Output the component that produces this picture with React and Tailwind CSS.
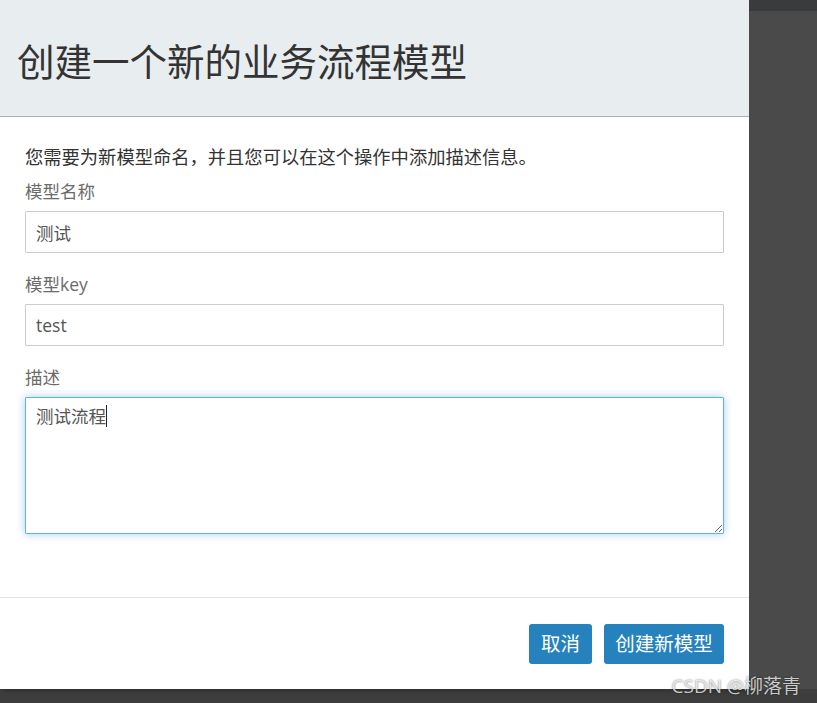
const fieldFont = {
  fontFamily: '"Open Sans", "Noto Sans CJK SC", sans-serif',
};

function Field({ label, value }) {
  return (
    <div className="mb-[19px]">
      <label className="mb-[7px] block text-[17.5px] leading-[25px] text-[#6b6b6b]">
        {label}
      </label>
      <input
        readOnly
        value={value}
        className="block h-[42px] w-full rounded-[1px] border border-[#cccccc] bg-white px-[10px] text-[17.5px] text-[#555555] outline-none"
      />
    </div>
  );
}

export default function App() {
  return (
    <div
      className="relative flex h-[703px] w-[817px] items-start overflow-hidden bg-[#3d3d3d]"
      style={fieldFont}
    >
      <div className="flex h-[689px] w-[749px] shrink-0 flex-col bg-white shadow-[2px_0_6px_rgba(0,0,0,0.45)]">
        <div className="flex h-[117px] items-center border-b border-[#a9b1b9] bg-[#e8edf0] pl-[17px] pt-[8px]">
          <h1 className="text-[37.5px] font-normal leading-none text-[#333333]">
            创建一个新的业务流程模型
          </h1>
        </div>

        <div className="flex-1 px-[25px] pt-[27px]">
          <p className="mb-[10px] text-[18.3px] leading-[25px] text-[#333333]">
            您需要为新模型命名，并且您可以在这个操作中添加描述信息。
          </p>
          <Field label="模型名称" value="测试" />
          <Field label="模型key" value="test" />
          <div>
            <label className="mb-[7px] block text-[17.5px] leading-[25px] text-[#6b6b6b]">
              描述
            </label>
            <div className="relative">
              <textarea
                readOnly
                defaultValue="测试流程"
                className="block h-[137px] w-full rounded-[1px] border border-[#66afe9] bg-white px-[10px] py-[6px] text-[17.5px] leading-[25px] text-[#555555] shadow-[0_0_8px_rgba(102,175,233,0.6)] outline-none"
              />
              {/* caret */}
              <span className="pointer-events-none absolute left-[81px] top-[8px] h-[22px] w-px bg-[#222]" />
            </div>
          </div>
        </div>

        <div className="flex h-[92px] items-center justify-end gap-[12px] border-t border-[#e5e5e5] px-[25px]">
          <button className="h-[40px] w-[63px] rounded-[3px] bg-[#2582bd] text-[19.5px] text-white">
            取消
          </button>
          <button className="h-[40px] w-[120px] rounded-[3px] bg-[#2582bd] text-[19.5px] text-white">
            创建新模型
          </button>
        </div>
      </div>

      <div className="flex h-[689px] flex-1 flex-col bg-[#4a4a4a]">
        <div className="h-[11px] bg-[#3a3b3c]" />
      </div>

      <span className="absolute bottom-[3px] right-[16px] text-[19px] text-white/75 [text-shadow:0_0_2px_rgba(0,0,0,0.6)]">
        CSDN @柳落青
      </span>
    </div>
  );
}
